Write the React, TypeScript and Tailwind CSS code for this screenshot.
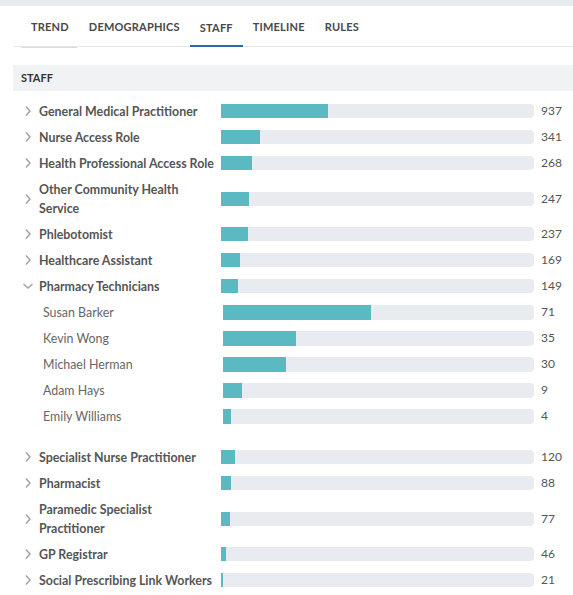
type Row = { label: string; value: number; children?: { label: string; value: number }[] };

const rows: Row[] = [
  { label: "General Medical Practitioner", value: 937 },
  { label: "Nurse Access Role", value: 341 },
  { label: "Health Professional Access Role", value: 268 },
  { label: "Other Community Health Service", value: 247 },
  { label: "Phlebotomist", value: 237 },
  { label: "Healthcare Assistant", value: 169 },
  {
    label: "Pharmacy Technicians",
    value: 149,
    children: [
      { label: "Susan Barker", value: 71 },
      { label: "Kevin Wong", value: 35 },
      { label: "Michael Herman", value: 30 },
      { label: "Adam Hays", value: 9 },
      { label: "Emily Williams", value: 4 },
    ],
  },
  { label: "Specialist Nurse Practitioner", value: 120 },
  { label: "Pharmacist", value: 88 },
  { label: "Paramedic Specialist Practitioner", value: 77 },
  { label: "GP Registrar", value: 46 },
  { label: "Social Prescribing Link Workers", value: 21 },
];

const total = rows.reduce((s, r) => s + r.value, 0) + 40;

function Chevron({ open }: { open?: boolean }) {
  return (
    <svg width="12" height="12" viewBox="0 0 12 12" className="shrink-0">
      {open ? (
        <path d="M1.5 4 L6 8 L10.5 4" fill="none" stroke="#a3a3a3" strokeWidth="1.5" />
      ) : (
        <path d="M4 1.5 L8 6 L4 10.5" fill="none" stroke="#a3a3a3" strokeWidth="1.5" />
      )}
    </svg>
  );
}

function Bar({ pct, h }: { pct: number; h: string }) {
  return (
    <div className={`flex-1 ${h} bg-[#e8ecf0] rounded-r-[4px] overflow-hidden`}>
      <div className="h-full bg-[#5bb9c2]" style={{ width: `${pct}%` }} />
    </div>
  );
}

export default function App() {
  return (
    <div className="w-[573px] h-[595px] bg-white overflow-hidden text-[#555]" style={{ fontFamily: "Lato, 'Noto Sans', sans-serif" }}>
      <div className="h-[6px] bg-[#e9ecef]" />
      <div className="ml-[14px] h-[41px] border-b border-[#e4e7ea] relative">
        <div className="absolute left-[7px] -bottom-[2px] w-[56px] h-[1px] bg-[#d9dde1]" />
        <div className="pl-[7px] h-full flex items-end">
          {["TREND", "DEMOGRAPHICS", "STAFF", "TIMELINE", "RULES"].map((t) => (
            <div
              key={t}
              className={`px-[10px] h-full flex items-center text-[11px] font-bold tracking-[0.2px] text-[#484848] ${t === "STAFF" ? "border-b-2 border-[#2b6aa4] -mb-[1px] pt-[4px]" : "pt-[3px]"}`}
            >
              {t}
            </div>
          ))}
        </div>
      </div>
      <div className="mt-[18px] ml-[13px] h-[26px] bg-[#f0f2f4] flex items-center pl-[8px] text-[11px] font-bold text-[#333]">
        STAFF
      </div>
      <div className="mt-[7px] pl-[22px]">
        {rows.map((r) => (
          <div key={r.label}>
            <div className="flex items-center py-[3.5px]">
              <div className="w-[199px] flex items-center shrink-0">
                <Chevron open={!!r.children} />
                <div className="ml-[5px] text-[12.4px] leading-[19px] font-bold text-[#555] w-[178px]">{r.label}</div>
              </div>
              <Bar pct={(r.value / total) * 100} h="h-[14px]" />
              <div className="w-[39px] pl-[7px] text-[12px] text-[#555]">{r.value}</div>
            </div>
            {r.children && (
              <div className="pb-[15px]">
                {r.children.map((c) => (
                  <div key={c.label} className="flex items-center py-[3.5px]">
                    <div className="w-[201px] pl-[21px] text-[12.4px] leading-[19px] text-[#666] shrink-0">{c.label}</div>
                    <Bar pct={(c.value / r.value) * 100} h="h-[15px]" />
                    <div className="w-[39px] pl-[7px] text-[12px] text-[#555]">{c.value}</div>
                  </div>
                ))}
              </div>
            )}
          </div>
        ))}
      </div>
    </div>
  );
}
